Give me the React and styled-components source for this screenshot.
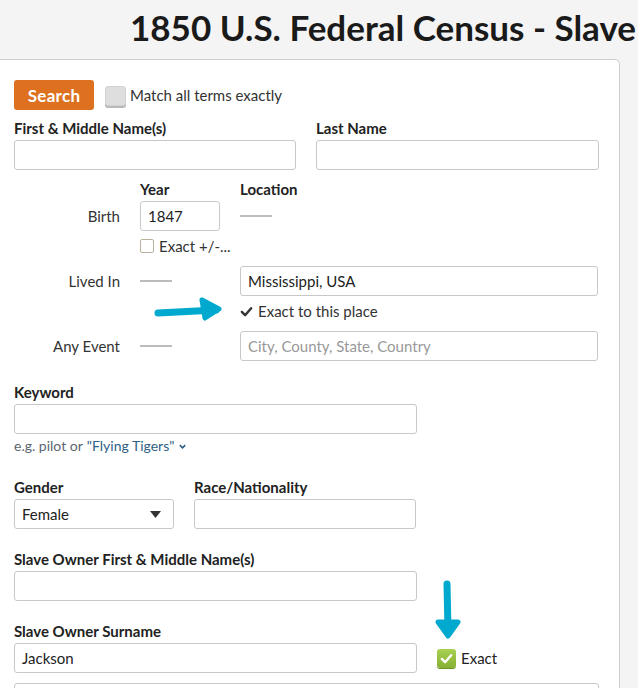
import React from 'react';
import styled, { createGlobalStyle } from 'styled-components';

const GlobalStyle = createGlobalStyle`
    html, body {
        margin: 0;
        padding: 0;
        background: #f4f4f4;
        font-family: Lato, "Open Sans", "Liberation Sans", sans-serif;
        color: #222;
        overflow: hidden;
    }
`;

const Page = styled.div`
    width: 638px;
    height: 688px;
    overflow: hidden;
    background: #f4f4f4;
`;

const Title = styled.h1`
    margin: 0;
    height: 59px;
    padding-left: 130px;
    box-sizing: border-box;
    font-size: 35px;
    font-weight: 700;
    line-height: 54px;
    color: #1a1a1a;
    white-space: nowrap;
`;

const Card = styled.div`
    position: relative;
    margin-left: -10px;
    width: 630px;
    box-sizing: border-box;
    background: #fff;
    border: 1px solid #ccc;
    border-radius: 5px;
    padding: 20px 20px 0 23px;
    min-height: 700px;
`;

const TopRow = styled.div`
    display: flex;
    align-items: center;
    gap: 11px;
    height: 30px;
`;

const SearchButton = styled.button`
    height: 30px;
    width: 80px;
    border: none;
    border-radius: 3px;
    background: #dd711f;
    color: #fff;
    font-family: inherit;
    font-size: 17px;
    font-weight: 700;
    letter-spacing: 0.3px;
    padding: 0;
`;

const CheckRow = styled.label`
    display: flex;
    align-items: center;
    gap: 4px;
    font-size: 15px;
    color: #333;
    line-height: 20px;
`;

const GrayBox = styled.span`
    width: 19px;
    height: 18px;
    border-radius: 3px;
    background: #dedede;
    border: 1px solid #d2d2d2;
    box-shadow: 0 2px 0 #b9b9b9;
    margin-top: 2px;
`;

const TwoCols = styled.div`
    display: grid;
    grid-template-columns: ${p => p.$cols};
    column-gap: 20px;
    margin-top: ${p => p.$top || 0}px;
`;

const Field = styled.div`
    display: flex;
    flex-direction: column;
    margin-top: ${p => p.$top || 0}px;
`;

const Label = styled.div`
    font-size: 15px;
    font-weight: 700;
    line-height: 20px;
    height: 20px;
    margin-bottom: 2px;
    color: #222;
    white-space: nowrap;
`;

const Input = styled.div`
    height: 30px;
    box-sizing: border-box;
    border: 1px solid #c8c8c8;
    border-radius: 3px;
    background: #fff;
    padding: 0 7px;
    display: flex;
    align-items: center;
    font-size: 15px;
    color: ${p => (p.$placeholder ? '#999' : '#222')};
    width: ${p => (p.$width ? `${p.$width}px` : 'auto')};
`;

const Events = styled.div`
    display: grid;
    grid-template-columns: 106px 80px 358px;
    column-gap: 20px;
    margin-top: 9px;
    align-items: center;
`;

const ColHead = styled.div`
    font-size: 15px;
    font-weight: 700;
    line-height: 20px;
    height: 20px;
    margin-bottom: 2px;
    grid-column: ${p => p.$col};
`;

const RowName = styled.div`
    text-align: right;
    font-size: 15px;
    color: #333;
    grid-column: 1;
`;

const Dash = styled.div`
    width: 32px;
    height: 2px;
    background: #bcbcbc;
`;

const SubLine = styled.div`
    grid-column: ${p => p.$col};
    display: flex;
    align-items: center;
    gap: 5px;
    height: 20px;
    margin: 5px 0 10px;
    font-size: 15px;
    color: #333;
    white-space: nowrap;
`;

const SmallBox = styled.span`
    width: 12px;
    height: 12px;
    border: 1px solid #b9b39c;
    border-radius: 2px;
    background: #fff;
`;

const Hint = styled.div`
    margin-top: 2px;
    height: 20px;
    line-height: 20px;
    font-size: 14px;
    color: #5a6670;
    display: flex;
    align-items: center;
    gap: 4px;
`;

const HintLink = styled.span`
    color: #2e5f86;
`;

const Select = styled(Input)`
    justify-content: space-between;
    padding-right: 12px;
`;

const SurnameRow = styled.div`
    display: flex;
    align-items: center;
    gap: 20px;
`;

const GreenBox = styled.span`
    width: 19px;
    height: 19px;
    border-radius: 3px;
    background: linear-gradient(#a9d152, #86b034);
    box-shadow: 0 1px 0 #6f9427;
    display: flex;
    align-items: center;
    justify-content: center;
`;

const ExactLabel = styled.span`
    display: flex;
    align-items: center;
    gap: 5px;
    font-size: 15px;
    color: #222;
`;

const Overlay = styled.svg`
    position: absolute;
    left: ${p => p.$x}px;
    top: ${p => p.$y}px;
    overflow: visible;
`;

const Check = ({ color = '#333', size = 13 }) => (
    <svg width={size} height={size} viewBox="0 0 14 14">
        <path d="M2 7.5 L5.5 11 L12 3.5" fill="none" stroke={color} strokeWidth="2.6" strokeLinecap="round" strokeLinejoin="round" />
    </svg>
);

const App = () => (
    <Page>
        <GlobalStyle />
        <Title>1850 U.S. Federal Census - Slave</Title>
        <Card>
            <TopRow>
                <SearchButton>Search</SearchButton>
                <CheckRow>
                    <GrayBox />
                    Match all terms exactly
                </CheckRow>
            </TopRow>

            <TwoCols $cols="282px 283px" $top={8}>
                <Field>
                    <Label>First &amp; Middle Name(s)</Label>
                    <Input />
                </Field>
                <Field>
                    <Label>Last Name</Label>
                    <Input />
                </Field>
            </TwoCols>

            <Events>
                <ColHead $col={2}>Year</ColHead>
                <ColHead $col={3}>Location</ColHead>

                <RowName>Birth</RowName>
                <Input>1847</Input>
                <Dash />
                <SubLine $col="2 / 4">
                    <SmallBox />
                    Exact +/-...
                </SubLine>

                <RowName>Lived In</RowName>
                <Dash />
                <Input>Mississippi, USA</Input>
                <SubLine $col={3}>
                    <Check />
                    Exact to this place
                </SubLine>

                <RowName>Any Event</RowName>
                <Dash />
                <Input $placeholder>City, County, State, Country</Input>
            </Events>

            <Field $top={21}>
                <Label>Keyword</Label>
                <Input $width={403} />
                <Hint>
                    e.g. pilot or <HintLink>"Flying Tigers"</HintLink>
                    <svg width="9" height="9" viewBox="0 0 10 10">
                        <path d="M2 3.5 L5 6.5 L8 3.5" fill="none" stroke="#2e5f86" strokeWidth="1.8" />
                    </svg>
                </Hint>
            </Field>

            <TwoCols $cols="160px 222px" $top={21}>
                <Field>
                    <Label>Gender</Label>
                    <Select>
                        Female
                        <svg width="11" height="7" viewBox="0 0 11 7">
                            <path d="M0 0 H11 L5.5 7 Z" fill="#333" />
                        </svg>
                    </Select>
                </Field>
                <Field>
                    <Label>Race/Nationality</Label>
                    <Input />
                </Field>
            </TwoCols>

            <Field $top={20}>
                <Label>Slave Owner First &amp; Middle Name(s)</Label>
                <Input $width={403} />
            </Field>

            <Field $top={20}>
                <Label>Slave Owner Surname</Label>
                <SurnameRow>
                    <Input $width={403}>Jackson</Input>
                    <ExactLabel>
                        <GreenBox>
                            <Check color="#fff" size={13} />
                        </GreenBox>
                        Exact
                    </ExactLabel>
                </SurnameRow>
            </Field>

            <Field $top={10}>
                <Input $width={585} />
            </Field>

            <Overlay $x={163} $y={236} width="70" height="26" viewBox="0 0 70 26">
                <path d="M4 17 L62 14" stroke="#00a9cd" strokeWidth="7" strokeLinecap="round" fill="none" />
                <path d="M48 4 L65 13 L51 22 Z" fill="#00a9cd" stroke="#00a9cd" strokeWidth="5" strokeLinejoin="round" />
            </Overlay>

            <Overlay $x={444} $y={520} width="30" height="62" viewBox="0 0 30 62">
                <path d="M12 4 L13 50" stroke="#00a9cd" strokeWidth="7" strokeLinecap="round" fill="none" />
                <path d="M3 42 L13 56 L23 42 Z" fill="#00a9cd" stroke="#00a9cd" strokeWidth="5" strokeLinejoin="round" />
            </Overlay>
        </Card>
    </Page>
);

export default App;
